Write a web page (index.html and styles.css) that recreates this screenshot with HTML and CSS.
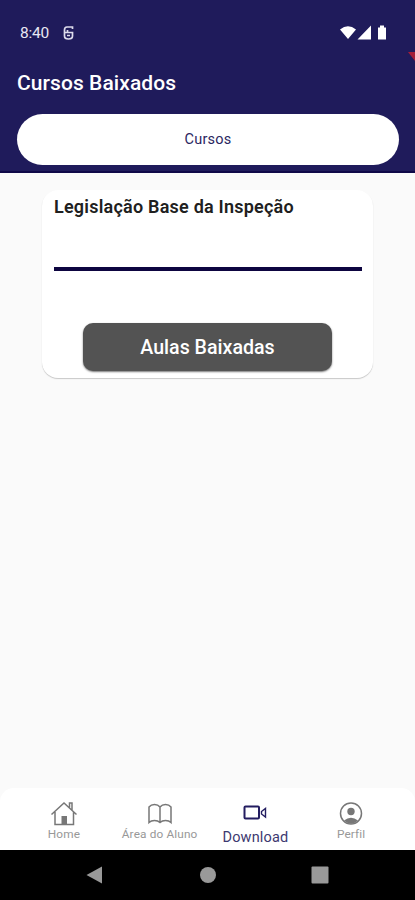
FILE: index.html
```html
<!DOCTYPE html>
<html lang="pt-BR">
<head>
<meta charset="utf-8">
<title>Cursos Baixados</title>
<link rel="stylesheet" href="styles.css">
</head>
<body>
<div class="app">
  <header class="header">
    <div class="status">
      <span class="clock">8:40</span>
      <svg class="notice" width="12" height="16" viewBox="0 0 12 16"><path d="M9.500 4V2H4Q1.500 2 1.500 5V11Q1.500 14 5.500 14Q9.500 14 9.500 11V7.500H1M4.500 7.500V5M4 10.500H7"/></svg>
      <svg class="signals" width="48" height="18" viewBox="0 0 48 18"><path d="M0 5.500Q8 -1 16 5.500L8 15ZM17.500 15.500L31 1.500V15.500ZM38 3.500H40V1.500H44V3.500H46V15.500H38Z"/></svg>
      <i class="debug"></i>
    </div>
    <h1 class="title">Cursos Baixados</h1>
    <div class="tab">Cursos</div>
  </header>
  <main class="content">
    <section class="card">
      <h2 class="course">Legislação Base da Inspeção</h2>
      <div class="progress"></div>
      <button class="button">Aulas Baixadas</button>
    </section>
  </main>
  <nav class="nav">
    <div class="item">
      <svg width="28" height="26" viewBox="0 0 28 26"><path d="M1.500 13.500L14 2L26.500 13.500M5 11V23.500H23.500V11M19.500 6.500V2H22V9.500"/><path class="solid" d="M11.500 15H17V23H11.500Z"/></svg>
      <span>Home</span>
    </div>
    <div class="item">
      <svg width="28" height="26" viewBox="0 0 28 26"><path d="M14 6Q12 3.500 8.500 3.500Q5 3.500 3 6V21.500Q5 19.500 8.500 19.500Q12 19.500 14 21.500Q16 19.500 19.500 19.500Q23 19.500 25 21.500V6Q23 3.500 19.500 3.500Q16 3.500 14 6V21.500"/></svg>
      <span>Área do Aluno</span>
    </div>
    <div class="item active">
      <svg width="28" height="26" viewBox="0 0 28 26"><rect x="3.500" y="5.500" width="14.500" height="12" rx="1"/><path class="lens" d="M20.500 10.500L24.500 7.500V16L20.500 13Z"/></svg>
      <span>Download</span>
    </div>
    <div class="item">
      <svg width="28" height="26" viewBox="0 0 28 26"><circle cx="14" cy="12.500" r="10.500"/><circle class="solid" cx="14" cy="10.500" r="3.700"/><path class="solid" d="M7 19.500Q14 14 21 19.500Q14 26 7 19.500Z"/></svg>
      <span>Perfil</span>
    </div>
  </nav>
  <footer class="system">
    <svg width="18" height="18" viewBox="0 0 18 18"><path d="M0.500 9L16 0.500V17.500Z"/></svg>
    <svg width="18" height="18" viewBox="0 0 18 18"><circle cx="9" cy="9" r="8"/></svg>
    <svg width="18" height="18" viewBox="0 0 18 18"><rect x="0.500" y="0.500" width="17" height="17" rx="1"/></svg>
  </footer>
</div>
</body>
</html>
```

FILE: styles.css
```css
* { box-sizing: border-box; }
body { margin: 0; font-family: Roboto, "Liberation Sans", sans-serif; }
h1, h2 { margin: 0; }
.app { width: 415px; height: 900px; display: flex; flex-direction: column; background: #fafafa; overflow: hidden; }
.header { height: 173px; flex: none; background: #1f1b5b; padding: 23px 16px 0 17px; border-bottom: 2px solid #0f0848; color: #fff; }
.status { display: flex; align-items: center; height: 20px; padding-left: 3px; }
.clock { width: 43px; font-size: 15.5px; letter-spacing: -0.2px; color: #e9e8f3; }
.notice { fill: none; stroke: #dddcec; stroke-width: 1.7; }
.signals { margin-left: auto; margin-right: 11px; fill: #fff; }
.debug { position: absolute; left: 408px; top: 52px; width: 7px; height: 9px; background: #a51d38; clip-path: polygon(0 0, 100% 0, 100% 100%); }
.title { margin-top: 27px; height: 26px; line-height: 26px; font-size: 21px; font-weight: 500; letter-spacing: 0.08px; white-space: nowrap; }
.tab { margin-top: 18px; height: 51px; border-radius: 26px; background: #fff; color: #2b2761; display: flex; align-items: center; justify-content: center; font-size: 14.5px; letter-spacing: 0.2px; }
.content { flex: 1; padding: 17px 42px 0; }
.card { width: 331px; height: 188px; padding: 5px 11px 5px 12px; border-radius: 16px; background: #fff; box-shadow: 0 1px 1px #c8c8c8; display: flex; flex-direction: column; }
.course { height: 24px; line-height: 24px; font-size: 18px; font-weight: 600; letter-spacing: 0.22px; color: #202020; white-space: nowrap; }
.progress { height: 4px; margin-top: 48px; background: #0d0540; flex: none; }
.button { width: 249px; height: 48px; margin: 52px 0 0 29px; border: 0; border-radius: 10px; background: #535353; box-shadow: 0 1px 2px #777; color: #fff; font: 500 19.6px Roboto, sans-serif; flex: none; }
.nav { height: 62px; flex: none; padding: 0 16px; display: flex; background: #fff; border-radius: 14px 14px 0 0; }
.item { flex: 1; padding-top: 13px; display: flex; flex-direction: column; align-items: center; color: #989898; font-size: 11.8px; line-height: 14px; letter-spacing: 0.15px; white-space: nowrap; }
.item svg { flex: none; fill: none; stroke: #777; stroke-width: 1.5; }
.item .solid { fill: #777; stroke: none; }
.active { color: #3d3970; font-size: 14.5px; }
.item.active svg { stroke: #231d60; stroke-width: 2; }
.active span { padding-top: 4px; }
.active .lens { stroke-width: 1.4; }
.system { height: 50px; flex: none; padding: 0 86px; background: #000; display: flex; align-items: center; justify-content: space-between; }
.system svg { fill: #999; }
```
